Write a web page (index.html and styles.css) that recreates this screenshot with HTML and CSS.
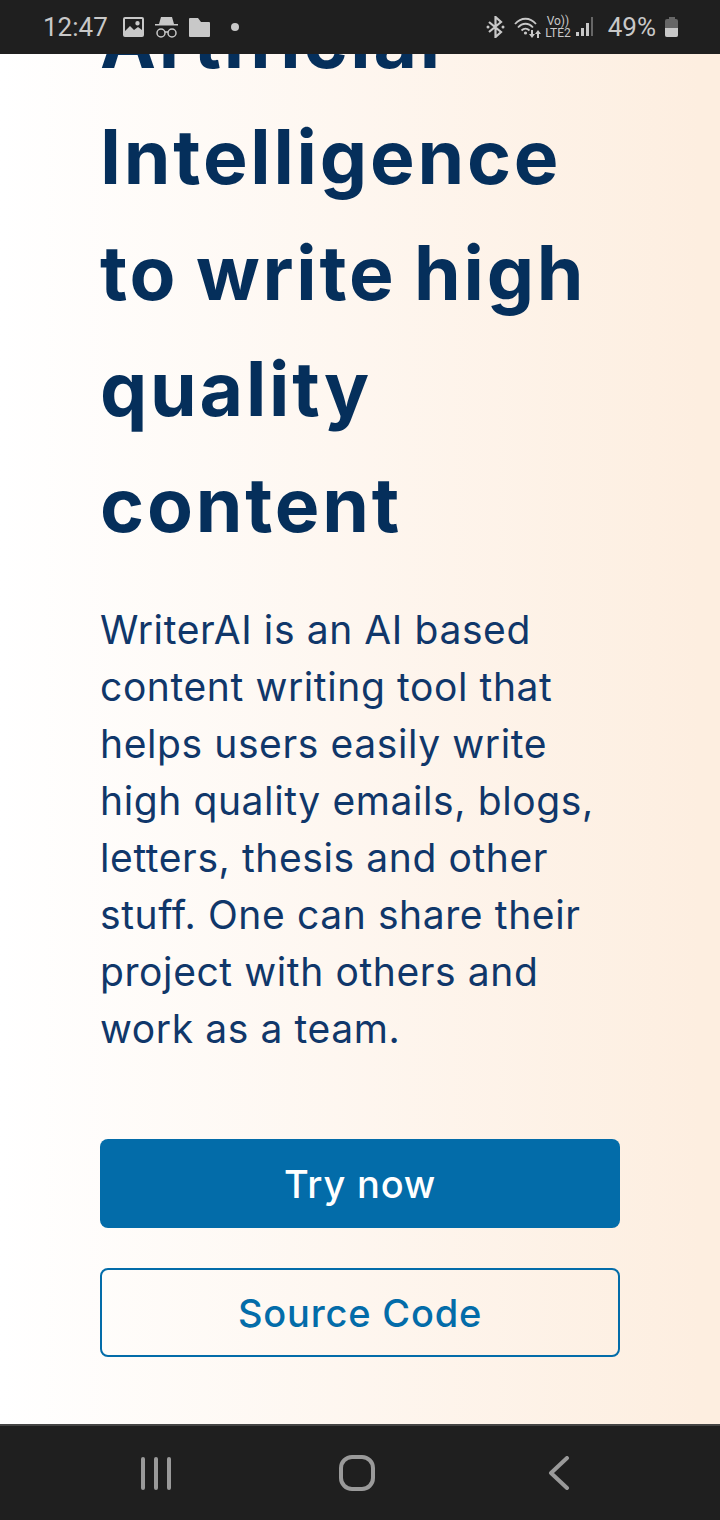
FILE: index.html
```html
<!DOCTYPE html>
<html lang="en">
<head>
  <meta charset="UTF-8">
  <meta name="viewport" content="width=device-width, initial-scale=1.0">
  <title>WriterAI</title>
  <link rel="stylesheet" href="styles.css">
</head>
<body>
  <div class="phone">
    <div class="status-bar">
      <div class="status-left">
        <span class="clock">12:47</span>
        <svg class="icon-picture" width="21" height="20" viewBox="0 0 21 20">
          <path fill="#c8c8c8" fill-rule="evenodd" d="M2 0h17a2 2 0 0 1 2 2v16a2 2 0 0 1-2 2H2a2 2 0 0 1-2-2V2a2 2 0 0 1 2-2zM2 2v12l5-5 4 4 4-3 4 3V2zM14.500 4a2.200 2.200 0 1 1 0 4.400 2.200 2.200 0 0 1 0-4.400z"/>
        </svg>
        <svg class="icon-incognito" width="23" height="21" viewBox="0 0 23 21">
          <path fill="#c8c8c8" d="M6 0h11l2 7h4v1.500H0V7h4z"/>
          <circle cx="6" cy="16" r="4" fill="none" stroke="#c8c8c8" stroke-width="1.500"/>
          <circle cx="17" cy="16" r="4" fill="none" stroke="#c8c8c8" stroke-width="1.500"/>
          <path stroke="#c8c8c8" stroke-width="1.500" d="M10 15h3"/>
        </svg>
        <svg class="icon-folder" width="21" height="19" viewBox="0 0 21 19">
          <path fill="#c8c8c8" d="M1 0h8l3 4h8a1 1 0 0 1 1 1v13a1 1 0 0 1-1 1H1a1 1 0 0 1-1-1V1a1 1 0 0 1 1-1z"/>
        </svg>
        <span class="dot"></span>
      </div>
      <div class="status-right">
        <svg class="icon-bt" width="19" height="22" viewBox="0 0 19 22">
          <path fill="none" stroke="#c8c8c8" stroke-width="2.200" d="M3 6l12 10-5.500 5V1L15 6 3 16"/>
          <circle cx="2" cy="11" r="1.500" fill="#c8c8c8"/>
          <circle cx="17" cy="11" r="1.500" fill="#c8c8c8"/>
        </svg>
        <svg class="icon-wifi" width="27" height="21" viewBox="0 0 27 21">
          <g fill="none" stroke="#c8c8c8" stroke-width="1.800">
            <path d="M1 7c6-7 15-7 21 0"/>
            <path d="M4 10.500c4.500-5 10.500-5 15 0"/>
            <path d="M7.500 13.500c2.500-2.500 5.500-2.500 8 0"/>
          </g>
          <circle cx="11.500" cy="16" r="1.600" fill="#c8c8c8"/>
          <path fill="#c8c8c8" d="M17 13h2v4h2l-3 4-3-4h2zM23 21h2v-4h2l-3-4-3 4h2z"/>
        </svg>
        <div class="lte">
          <span>Vo))</span>
          <span>LTE2</span>
        </div>
        <svg class="icon-signal" width="18" height="20" viewBox="0 0 18 20">
          <rect x="0" y="15" width="3" height="4" fill="#c8c8c8"/>
          <rect x="5" y="11" width="3" height="8" fill="#c8c8c8"/>
          <rect x="10" y="6" width="3" height="13" fill="#c8c8c8"/>
          <rect x="15" y="0" width="2" height="19" fill="#666"/>
        </svg>
        <span class="battery-text">49%</span>
        <div class="battery">
          <div class="battery-cap"></div>
          <div class="battery-body"><div class="battery-level"></div></div>
        </div>
      </div>
    </div>

    <main class="hero">
      <h1>Artificial<br>Intelligence<br>to write high<br>quality<br>content</h1>
      <p>WriterAI is an AI based<br>content writing tool that<br>helps users easily write<br>high quality emails, blogs,<br>letters, thesis and other<br>stuff. One can share their<br>project with others and<br>work as a team.</p>
      <div class="actions">
        <a class="btn btn-primary" href="#">Try now</a>
        <a class="btn btn-outline" href="#">Source Code</a>
      </div>
    </main>

    <div class="nav-bar">
      <svg class="nav-recent" width="34" height="34" viewBox="0 0 34 34">
        <path fill="none" stroke="#9a9a9a" stroke-width="4" stroke-linecap="round" d="M4 3v29M17 3v29M30 3v29"/>
      </svg>
      <svg class="nav-home" width="36" height="36" viewBox="0 0 36 36">
        <rect x="2" y="2" width="32" height="32" rx="11" fill="none" stroke="#9a9a9a" stroke-width="4"/>
      </svg>
      <svg class="nav-back" width="22" height="34" viewBox="0 0 22 34">
        <path fill="none" stroke="#9a9a9a" stroke-width="4" stroke-linecap="round" stroke-linejoin="round" d="M19 2L3 17l16 15"/>
      </svg>
    </div>
  </div>
</body>
</html>
```

FILE: styles.css
```css
* {
  box-sizing: border-box;
}
html, body {
  margin: 0;
  height: 100%;
}
body {
  font-family: "Inter", "Liberation Sans", sans-serif;
}
.phone {
  width: 720px;
  height: 1520px;
  display: flex;
  flex-direction: column;
  overflow: hidden;
}

/* status bar */
.status-bar {
  height: 54px;
  flex-shrink: 0;
  background-color: #1f1f1f;
  color: #c8c8c8;
  display: flex;
  justify-content: space-between;
  align-items: center;
  padding: 0 42px 0 43px;
  position: relative;
  z-index: 1;
}
.status-left, .status-right {
  display: flex;
  align-items: center;
}
.clock {
  font-family: "Roboto", sans-serif;
  font-size: 26px;
  margin-right: 15px;
}
.icon-picture {
  margin-right: 11px;
}
.icon-incognito {
  margin-right: 11px;
}
.icon-folder {
  margin-right: 21px;
}
.dot {
  width: 8px;
  height: 8px;
  border-radius: 50%;
  background-color: #c8c8c8;
}
.icon-bt {
  margin-right: 9px;
}
.icon-wifi {
  margin-right: 4px;
}
.lte {
  display: flex;
  flex-direction: column;
  align-items: center;
  font-family: "Roboto", sans-serif;
  font-size: 12px;
  line-height: 12px;
  margin-right: 5px;
}
.battery-text {
  font-family: "Roboto", sans-serif;
  font-size: 26px;
  margin: 0 9px 0 14px;
}
.battery {
  width: 13px;
  display: flex;
  flex-direction: column;
  align-items: center;
}
.battery-cap {
  width: 6px;
  height: 2px;
  background-color: #666;
}
.battery-body {
  width: 13px;
  height: 18px;
  background-color: #666;
  border-radius: 2px;
  display: flex;
  align-items: flex-end;
  overflow: hidden;
}
.battery-level {
  width: 100%;
  height: 9px;
  background-color: #c8c8c8;
}

/* hero */
.hero {
  flex: 1;
  min-height: 0;
  overflow: hidden;
  padding: 0 100px;
  background: linear-gradient(90deg, #ffffff 0%, #fdeee0 97%);
}
.hero h1 {
  margin: -71px 0 0;
  font-size: 75px;
  line-height: 116px;
  letter-spacing: 2.800px;
  word-spacing: -3px;
  font-weight: 650;
  white-space: nowrap;
  color: #052f5b;
}
.hero p {
  margin: 38px 0 0;
  font-size: 39px;
  line-height: 57px;
  letter-spacing: 0.600px;
  font-weight: 400;
  white-space: nowrap;
  color: #10376a;
}
.actions {
  margin-top: 82px;
  display: flex;
  flex-direction: column;
  gap: 40px;
}
.btn {
  height: 89px;
  border-radius: 8px;
  display: flex;
  justify-content: center;
  align-items: center;
  font-size: 38px;
  letter-spacing: 0.800px;
  font-weight: 500;
  text-decoration: none;
}
.btn-primary {
  background-color: #036ca9;
  color: #fff;
}
.btn-outline {
  border: 2px solid #036ca9;
  color: #036ca9;
}

/* nav bar */
.nav-bar {
  height: 96px;
  flex-shrink: 0;
  background-color: #1f1f1f;
  border-top: 2px solid #444;
  display: flex;
  align-items: center;
}
.nav-recent {
  margin-left: 139px;
}
.nav-home {
  margin-left: 166px;
}
.nav-back {
  margin-left: 173px;
}
```
